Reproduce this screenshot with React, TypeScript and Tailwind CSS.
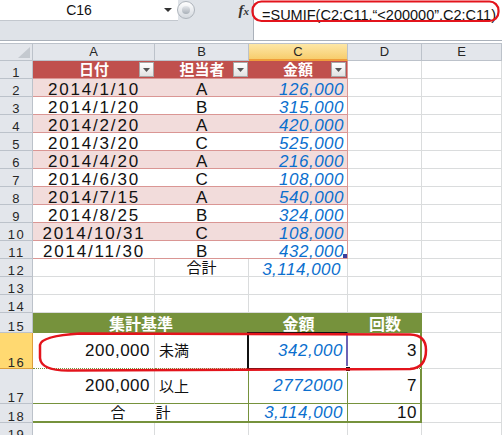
import React from 'react';

const NUM = "font-['Liberation_Sans',sans-serif]";
const JP = "font-['Noto_Sans_CJK_JP',sans-serif]";
const G = 'bg-white border-r border-b border-[#dadcdd]';

function RH({ n, hl = false }: { n: number; hl?: boolean }) {
  return (
    <div
      className={`flex items-end justify-center border-r border-b ${
        hl ? 'bg-[#ffd971] border-[#dc9f3c]' : 'bg-[#e3e6eb] border-[#bcc2ca]'
      } text-[13px] leading-[10px] tracking-[1.5px] text-[#262626] ${NUM}`}
    >
      <span className="pl-[1px]">{n}</span>
    </div>
  );
}

function ColH({ l, hl = false }: { l: string; hl?: boolean }) {
  return (
    <div
      className={`flex items-center justify-center border-t border-r border-[#bcc2ca] ${
        hl
          ? 'bg-linear-to-b from-[#fde7a6] to-[#f7cd6c] border-b-2 border-b-[#ef9d3a]'
          : 'bg-[#e3e6eb] border-b'
      } text-[13px] text-[#262626] ${NUM}`}
    >
      {l}
    </div>
  );
}

function Filter() {
  return (
    <span className="absolute right-[1px] top-[1px] w-[15px] h-[15px] flex items-center justify-center bg-linear-to-b from-white to-[#e2e2e2] border border-[#a8a8a8]">
      <svg width="7" height="4" viewBox="0 0 7 4">
        <path d="M0 0h7L3.5 4z" fill="#555" />
      </svg>
    </span>
  );
}

const data: [string, string, string][] = [
  ['2014/1/10', 'A', '126,000'],
  ['2014/1/20', 'B', '315,000'],
  ['2014/2/20', 'A', '420,000'],
  ['2014/3/20', 'C', '525,000'],
  ['2014/4/20', 'A', '216,000'],
  ['2014/6/30', 'C', '108,000'],
  ['2014/7/15', 'A', '540,000'],
  ['2014/8/25', 'B', '324,000'],
  ['2014/10/31', 'C', '108,000'],
  ['2014/11/30', 'B', '432,000'],
];

const numTxt = `text-[17px] leading-[12px] tracking-[0.5px] ${NUM}`;
const blueTxt = `text-[17px] leading-[12px] tracking-[0.5px] italic text-[#0b6fce] ${NUM}`;
const jpTxt = `text-[15px] leading-[12px] pb-[3px] text-[#111] ${JP}`;

export default function App() {
  return (
    <div className="relative w-[502px] h-[435px] overflow-hidden bg-white">
      {/* formula bar */}
      <div className="flex h-[41px] bg-[#dfe3e8] border-b border-[#aab1ba]">
        <div className="w-[253px] flex flex-col">
          <div className="h-[21px] flex">
            <div className="w-[178px] bg-white border-b border-[#c3c8ce] flex items-center">
              <span className={`w-[158px] text-center text-[14px] text-[#111] ${NUM}`}>C16</span>
              <svg width="8" height="4" viewBox="0 0 8 4" className="ml-[6px]">
                <path d="M0 0h8L4 4z" fill="#333" />
              </svg>
            </div>
            <div className="w-[18px] h-[18px] mt-[1px] -ml-[1px] rounded-full border border-[#aeb4bb] bg-linear-to-b from-white to-[#d4d9df] flex items-center justify-center">
              <div className="w-[8px] h-[8px] rounded-full bg-linear-to-b from-[#e4e7eb] to-[#a9b0b8]" />
            </div>
            <div className="flex-1 flex items-center justify-end pr-[4px]">
              <span className="font-['Liberation_Serif',serif] italic font-bold text-[15px] text-[#333] leading-none">
                f<span className="text-[11px]">x</span>
              </span>
            </div>
          </div>
        </div>
        <div className="flex-1 bg-white border-l border-[#aab1ba] pl-[8px] pt-[2px]">
          <span className={`text-[14.5px] text-[#111] ${NUM}`}>=SUMIF(C2:C11,“&lt;200000”,C2:C11)</span>
        </div>
      </div>
      <div className="h-[2px] bg-white" />

      {/* sheet */}
      <div className="grid grid-cols-[33px_122px_94px_99px_74px_80px] grid-rows-[18px_repeat(14,18px)_20px_36px_35px_19px_18px]">
        {/* column headers */}
        <div className="relative bg-[#e3e6eb] border-t border-r border-b border-[#bcc2ca]">
          <svg width="12" height="11" viewBox="0 0 12 11" className="absolute right-[2px] bottom-[2px]">
            <path d="M12 0V11H0z" fill="#c4c9cf" />
          </svg>
        </div>
        <ColH l="A" />
        <ColH l="B" />
        <ColH l="C" hl />
        <ColH l="D" />
        <ColH l="E" />

        {/* row 1: table header */}
        <RH n={1} />
        <div className="relative flex items-center justify-center bg-[#c0504d] border-b border-[#da9694]">
          <span className={`text-white font-bold text-[15px] ${JP}`}>日付</span>
          <Filter />
        </div>
        <div className="relative flex items-center justify-center bg-[#c0504d] border-b border-[#da9694]">
          <span className={`text-white font-bold text-[15px] ${JP}`}>担当者</span>
          <Filter />
        </div>
        <div className="relative flex items-center justify-center bg-[#c0504d] border-r border-b border-[#da9694]">
          <span className={`text-white font-bold text-[15px] ${JP}`}>金額</span>
          <Filter />
        </div>
        <div className={G} />
        <div className={G} />

        {data.map(([d, p, a], i) => {
          const band = i % 2 === 0 ? 'bg-[#f2dcdb]' : 'bg-white';
          return (
            <React.Fragment key={d}>
              <RH n={i + 2} />
              <div className={`flex items-end justify-center border-b border-[#da9694] ${band}`}>
                <span className={`text-[17px] leading-[12px] tracking-[1.8px] text-[#111] ${NUM}`}>{d}</span>
              </div>
              <div className={`flex items-end justify-center border-b border-[#da9694] ${band}`}>
                <span className={`${numTxt} text-[#111]`}>{p}</span>
              </div>
              <div className={`relative flex items-end justify-end pr-[3px] border-r border-b border-[#da9694] ${band}`}>
                <span className={blueTxt}>{a}</span>
                {i === 9 && <span className="absolute right-0 bottom-0 w-[4px] h-[4px] bg-[#3c3f9c]" />}
              </div>
              <div className={G} />
              <div className={G} />
            </React.Fragment>
          );
        })}

        {/* row 12 */}
        <RH n={12} />
        <div className={G} />
        <div className={`${G} flex items-end justify-center`}>
          <span className={jpTxt}>合計</span>
        </div>
        <div className={`${G} flex items-end justify-end pr-[6px]`}>
          <span className={blueTxt}>3,114,000</span>
        </div>
        <div className={G} />
        <div className={G} />

        {/* rows 13, 14 */}
        {[13, 14].map((n) => (
          <React.Fragment key={n}>
            <RH n={n} />
            <div className={G} />
            <div className={G} />
            <div className={G} />
            <div className={G} />
            <div className={G} />
          </React.Fragment>
        ))}

        {/* row 15: green header */}
        <RH n={15} />
        <div className="col-span-2 flex items-center justify-center bg-[#76923c]">
          <span className={`text-white font-bold text-[16px] leading-[16px] ${JP}`}>集計基準</span>
        </div>
        <div className="flex items-center justify-center bg-[#76923c]">
          <span className={`text-white font-bold text-[16px] leading-[16px] ${JP}`}>金額</span>
        </div>
        <div className="flex items-center justify-center bg-[#76923c]">
          <span className={`text-white font-bold text-[16px] leading-[16px] ${JP}`}>回数</span>
        </div>
        <div className={G} />

        {/* row 16 */}
        <RH n={16} hl />
        <div className="flex items-center justify-end pr-[4px] bg-white border-r border-r-[#dadcdd] border-b border-b-[#76923c] [border-bottom-style:dotted]">
          <span className={`${numTxt} text-[#111]`}>200,000</span>
        </div>
        <div className="flex items-center pl-[4px] bg-white border-r border-r-[#76923c] border-b border-b-[#76923c] [border-bottom-style:dotted]">
          <span className={`text-[15px] text-[#111] ${JP}`}>未満</span>
        </div>
        <div className="relative flex items-center justify-end pr-[4px] bg-white border-r border-r-[#76923c] border-b border-b-[#76923c]">
          <span className={blueTxt}>342,000</span>
          <span className="absolute left-[-2px] top-[-1px] right-[-1px] bottom-[-2px] border-2 border-[#111] border-r-[#6f63b3]" />
          <span className="absolute right-[-4px] bottom-[-4px] w-[6px] h-[6px] bg-[#111] border border-white" />
        </div>
        <div className="flex items-center justify-end pr-[3px] bg-white border-r-2 border-r-[#76923c] border-b border-b-[#76923c] [border-bottom-style:dotted]">
          <span className={`${numTxt} text-[#111]`}>3</span>
        </div>
        <div className={G} />

        {/* row 17 */}
        <RH n={17} />
        <div className="flex items-center justify-end pr-[4px] bg-white border-r border-r-[#dadcdd] border-b border-b-[#76923c]">
          <span className={`${numTxt} text-[#111]`}>200,000</span>
        </div>
        <div className="flex items-center pl-[4px] bg-white border-r border-r-[#76923c] border-b border-b-[#76923c]">
          <span className={`text-[15px] text-[#111] ${JP}`}>以上</span>
        </div>
        <div className="flex items-center justify-end pr-[4px] bg-white border-r border-r-[#76923c] border-b border-b-[#76923c]">
          <span className={blueTxt}>2772000</span>
        </div>
        <div className="flex items-center justify-end pr-[3px] bg-white border-r-2 border-r-[#76923c] border-b border-b-[#76923c]">
          <span className={`${numTxt} text-[#111]`}>7</span>
        </div>
        <div className={G} />

        {/* row 18 */}
        <RH n={18} />
        <div className="col-span-2 flex items-center justify-center bg-white border-r border-r-[#76923c] border-b-2 border-b-[#76923c]">
          <span className={`text-[15px] text-[#111] ${JP}`}>合　　計</span>
        </div>
        <div className="flex items-center justify-end pr-[4px] bg-white border-r border-r-[#76923c] border-b-2 border-b-[#76923c]">
          <span className={blueTxt}>3,114,000</span>
        </div>
        <div className="flex items-center justify-end pr-[3px] bg-white border-r-2 border-r-[#76923c] border-b-2 border-b-[#76923c]">
          <span className={`${numTxt} text-[#111]`}>10</span>
        </div>
        <div className={G} />

        {/* row 19 */}
        <RH n={19} />
        <div className={G} />
        <div className={G} />
        <div className={G} />
        <div className={G} />
        <div className={G} />
      </div>

      {/* red hand-drawn marks */}
      <svg className="absolute left-0 top-0 pointer-events-none" width="502" height="435" viewBox="0 0 502 435">
        <rect x="252.5" y="1.5" width="246" height="19.5" rx="9" fill="none" stroke="#e3141c" strokeWidth="2.2" />
        <path
          d="M80 333.5 L410 334.5 Q426 335 426 350 Q426 368 410 369 L70 370.5 Q41 371 40 358 L40 345 Q41 336 80 333.5 Z"
          fill="none"
          stroke="#e3141c"
          strokeWidth="2.5"
        />
      </svg>
    </div>
  );
}
